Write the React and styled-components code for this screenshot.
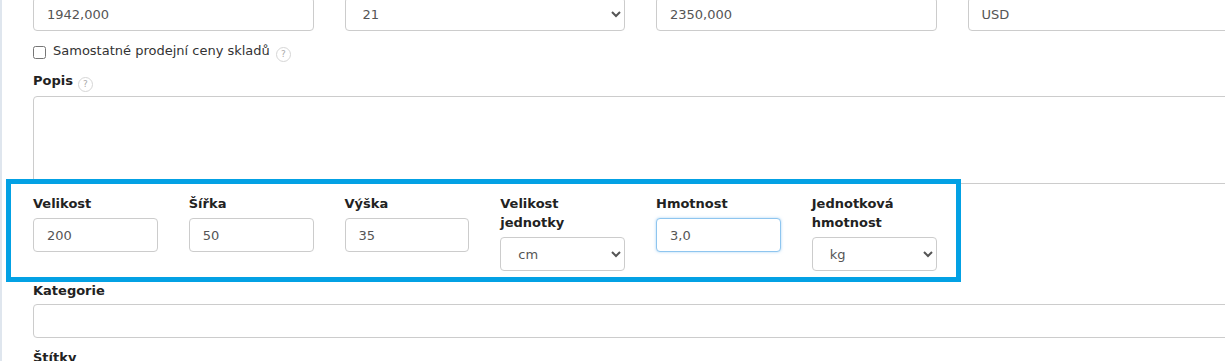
import styled, { createGlobalStyle, css } from "styled-components";

const GlobalStyle = createGlobalStyle`
  html, body {
    margin: 0;
    padding: 0;
    background: #fff;
    overflow: hidden;
  }

  body {
    font-family: "DejaVu Sans", Verdana, sans-serif;
    font-size: 13px;
    color: #333;
  }
`;

const Page = styled.div`
  border-left: 2px solid #dfe6ee;
  padding: 0 0 0 31px;
  margin-top: -3px;
  width: 1215px;
  min-height: 380px;
`;

const TopGrid = styled.div`
  display: grid;
  grid-template-columns: repeat(4, 280.5px);
  column-gap: 31px;
`;

const fieldBase = css`
  display: block;
  width: 100%;
  height: 34px;
  box-sizing: border-box;
  border: 1px solid #cccccc;
  border-radius: 4px;
  background: #fff;
  font-family: "DejaVu Sans", Verdana, sans-serif;
  font-size: 13px;
  color: #555;
  outline: none;
`;

const Input = styled.input`
  ${fieldBase}
  padding: 0 13px;

  ${(props) =>
    props.$focused &&
    css`
      border-color: #8ec5ef;
      box-shadow: 0 0 3px rgba(102, 175, 233, 0.55);
    `}
`;

const Select = styled.select`
  ${fieldBase}
  padding: 0 8px 0 13px;
`;

const TextArea = styled.textarea`
  ${fieldBase}
  height: 88px;
  resize: none;
  padding: 8px 13px;
`;

const CheckRow = styled.label`
  display: flex;
  align-items: center;
  gap: 7px;
  margin-top: 10px;
  line-height: 19px;
  color: #333;

  & > input {
    margin: 1px 0 0;
    width: 13px;
    height: 13px;
  }
`;

const Help = styled.span`
  display: inline-flex;
  align-items: center;
  justify-content: center;
  width: 13px;
  height: 13px;
  margin-left: ${(props) => props.$offset || 5}px;
  border: 1px solid #d6d6d6;
  border-radius: 50%;
  color: #aaaaaa;
  font-size: 9px;
  font-weight: normal;
  line-height: 1;
  vertical-align: -2px;
`;

const Group = styled.div`
  margin-top: ${(props) => props.$top || 0}px;
`;

const FieldLabel = styled.label`
  display: block;
  font-weight: bold;
  color: #222;
  line-height: 19px;
  margin-bottom: ${(props) => props.$gap || 4}px;
`;

const Highlight = styled.div`
  position: relative;
  width: 955px;
  box-sizing: border-box;
  margin: -5px 0 0 -27px;
  padding: 10px 0 6px 22px;
  border: 5px solid #03a1e4;
  background: #fff;
`;

const DimGrid = styled.div`
  display: grid;
  grid-template-columns: repeat(6, 124.75px);
  column-gap: 31px;
  align-items: start;
`;

const dimensions = [
  { label: "Velikost", value: "200" },
  { label: "Šířka", value: "50" },
  { label: "Výška", value: "35" },
  { label: "Velikost jednotky", options: ["cm", "mm", "m"] },
  { label: "Hmotnost", value: "3,0", focused: true },
  { label: "Jednotková hmotnost", options: ["kg", "g"] },
];

export default function App() {
  return (
    <>
      <GlobalStyle />
      <Page>
        <TopGrid>
          <Input defaultValue="1942,000" />
          <Select defaultValue="21">
            <option>21</option>
            <option>15</option>
            <option>0</option>
          </Select>
          <Input defaultValue="2350,000" />
          <Input defaultValue="USD" />
        </TopGrid>

        <CheckRow>
          <input type="checkbox" />
          <span>
            Samostatné prodejní ceny skladů<Help $offset={6}>?</Help>
          </span>
        </CheckRow>

        <Group $top={9}>
          <FieldLabel $gap={4}>
            Popis<Help>?</Help>
          </FieldLabel>
          <TextArea />
        </Group>

        <Highlight>
          <DimGrid>
            {dimensions.map((item) => (
              <div key={item.label}>
                <FieldLabel $gap={5}>{item.label}</FieldLabel>
                {item.options ? (
                  <Select defaultValue={item.options[0]}>
                    {item.options.map((o) => (
                      <option key={o}>{o}</option>
                    ))}
                  </Select>
                ) : (
                  <Input defaultValue={item.value} $focused={item.focused} />
                )}
              </div>
            ))}
          </DimGrid>
        </Highlight>

        <Group $top={-1}>
          <FieldLabel>Kategorie</FieldLabel>
          <Input />
        </Group>

        <Group $top={10}>
          <FieldLabel>Štítky</FieldLabel>
          <Input />
        </Group>
      </Page>
    </>
  );
}
